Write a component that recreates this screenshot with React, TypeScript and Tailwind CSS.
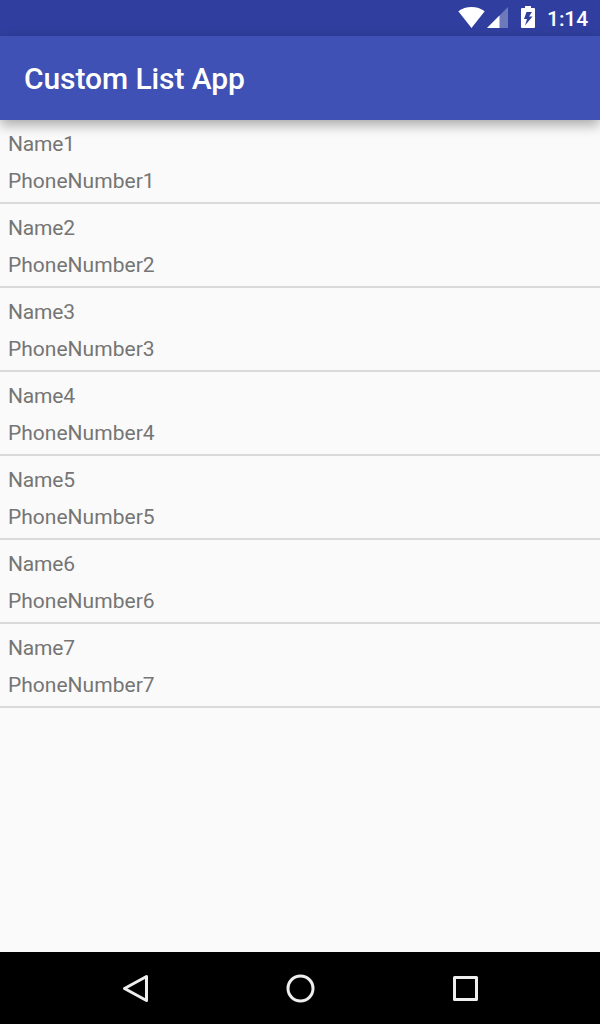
const contacts = [1, 2, 3, 4, 5, 6, 7];

function StatusBar() {
  return (
    <div className="flex h-9 shrink-0 items-center justify-end bg-[#303f9f] pr-3 text-white">
      <svg width="90" height="36" viewBox="0 0 90 36" fill="#fff">
        <path d="M8.3 11.3C12 8.4 16.500 7 21.500 7s9.500 1.400 13.200 4.300L21.500 28Z" />
        <path d="M58 7v21H37Z" fillOpacity=".3" />
        <path d="M49.500 15.500V28H37Z" />
        <path fillRule="evenodd" d="M75 6h6v2H84q1 0 1 1v18q0 1-1 1H72q-1 0-1-1V9q0-1 1-1h3ZM76.500 12l-2.500 7h3l-2 6.500 7.500-9h-3.500l3-4.500Z" />
      </svg>
      <span className="ml-[7px] pt-[2px] text-[21px] leading-[34px] font-medium tracking-[-0.1px]">1:14</span>
    </div>
  );
}

function ContactRow({ id }: { id: number }) {
  return (
    <li className="flex h-[84px] flex-col border-b-2 border-[#dadada] pl-2 pt-[10px] text-[21px] leading-[28px] text-[#757575]">
      <span className="tracking-[-0.2px]">Name{id}</span>
      <span className="mt-[9px] tracking-[0.02px]">PhoneNumber{id}</span>
    </li>
  );
}

export default function App() {
  return (
    <div className="flex h-[1024px] w-[600px] flex-col overflow-hidden bg-[#fafafa] font-[Roboto,sans-serif]">
      <StatusBar />
      <header className="z-10 flex h-[84px] shrink-0 items-center bg-[#3f51b5] pl-6 text-[30px] font-medium tracking-[-0.08px] text-white shadow-[0_5px_12px_rgba(0,0,0,0.33)]">
        <h1>Custom List App</h1>
      </header>
      <main className="flex-1">
        <ul>
          {contacts.map((id) => (
            <ContactRow key={id} id={id} />
          ))}
        </ul>
      </main>
      <nav className="flex h-[72px] shrink-0 items-center justify-center bg-black">
        <svg width="600" height="72" viewBox="0 0 600 72" fill="none" stroke="#eee" strokeWidth="3" strokeLinejoin="round">
          <path d="M146.500 24.500v24L124.500 36.500Z" />
          <circle cx="300.500" cy="36.500" r="12.500" />
          <rect x="454.500" y="25.500" width="22" height="22" />
        </svg>
      </nav>
    </div>
  );
}
